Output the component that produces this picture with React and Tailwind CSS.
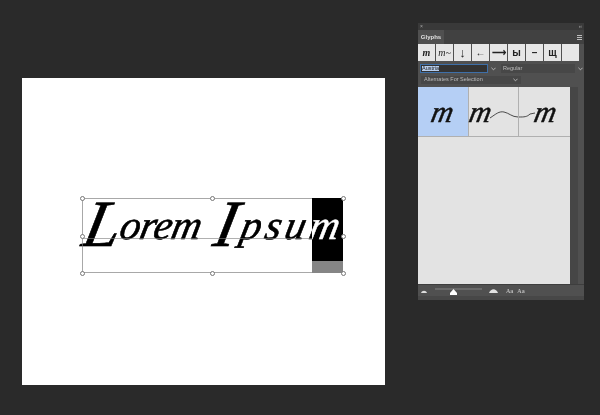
import React from "react";

const script = { fontFamily: '"Liberation Serif", serif' };
const ui = { fontFamily: '"Liberation Sans", Arial, sans-serif' };

function Handle({ cls }) {
  return <span className={`absolute w-[5px] h-[5px] rounded-full bg-white border border-[#777] ${cls}`} />;
}

function Caret() {
  return (
    <svg width="5" height="4" viewBox="0 0 6 4" className="shrink-0">
      <path d="M0.5 0.5 L3 3 L5.5 0.5" fill="none" stroke="#c8c8c8" strokeWidth="1" />
    </svg>
  );
}

function GlyphM({ tail }) {
  const place = tail === "right" ? "justify-start pl-[1px]" : tail === "left" ? "justify-end pr-[13px]" : "justify-center";
  return (
    <span className={`relative flex items-center ${place} w-full h-full`}>
      <span className="inline-block -skew-x-12 text-[30px] italic text-[#111] leading-none [-webkit-text-stroke:0.5px_#111]" style={script}>m</span>
      {tail === "right" && (
        <svg width="28" height="8" viewBox="0 0 28 8" className="absolute right-0 top-[24px]">
          <path d="M0 7 C6 3 9 0 14 1 C19 2 22 6 28 6" fill="none" stroke="#222" strokeWidth="0.8" />
        </svg>
      )}
      {tail === "left" && (
        <svg width="16" height="6" viewBox="0 0 16 6" className="absolute left-0 top-[25px]">
          <path d="M0 5 C5 5 8 5 11 2 L16 1" fill="none" stroke="#222" strokeWidth="0.8" />
        </svg>
      )}
    </span>
  );
}

function TopCell({ children }) {
  return (
    <div className="w-[17px] h-[17px] bg-[#e6e6e6] flex items-center justify-center text-[10px] font-bold text-[#222] leading-none overflow-hidden">
      {children}
    </div>
  );
}

export default function App() {
  return (
    <div className="w-[600px] h-[415px] bg-[#2a2a2a] flex items-start overflow-hidden" style={ui}>
      {/* Document canvas */}
      <div className="relative ml-[22px] mt-[78px] w-[363px] h-[307px] bg-white shrink-0">
        <div className="absolute left-[60px] top-[120px] w-[261px] h-[75px] border border-[#a8a8a8]" />
        <div className="absolute left-[60px] top-[160px] w-[261px] h-px bg-[#b0b0b0]" />
        <div className="absolute left-[290px] top-[120px] w-[31px] h-[63px] bg-black" />
        <div className="absolute left-[290px] top-[183px] w-[31px] h-[12px] bg-[#858585]" />
        <div
          className="absolute left-[62px] top-[106px] w-[290px] h-[80px] text-[41px] leading-[80px] italic text-white mix-blend-difference whitespace-nowrap [-webkit-text-stroke:0.5px_white]"
          style={script}
        >
          <span className="inline-block -skew-x-12 tracking-[-0.5px]">
            <span className="text-[66px]">L</span>
            <span className="align-[7px]">orem</span>
          </span>
          <span className="inline-block -skew-x-12 ml-[14px] tracking-[4px]">
            <span className="text-[66px]">I</span>
            <span className="align-[7px]">psum</span>
          </span>
        </div>
        <Handle cls="left-[58px] top-[118px]" />
        <Handle cls="left-[188px] top-[118px]" />
        <Handle cls="left-[319px] top-[118px]" />
        <Handle cls="left-[58px] top-[156px]" />
        <Handle cls="left-[319px] top-[156px]" />
        <Handle cls="left-[58px] top-[193px]" />
        <Handle cls="left-[188px] top-[193px]" />
        <Handle cls="left-[319px] top-[193px]" />
      </div>

      {/* Glyphs panel */}
      <div className="ml-[33px] mt-[23px] w-[166px] h-[277px] bg-[#505050] flex flex-col shrink-0">
        <div className="h-[7px] bg-[#393939] flex items-center justify-between px-[2px] text-[5px] leading-none text-[#aaa]">
          <span>×</span>
          <span>‹‹</span>
        </div>
        <div className="h-[14px] bg-[#414141] flex items-stretch justify-between">
          <div className="w-[26px] bg-[#505050] flex items-center justify-center text-[6px] font-bold text-[#e0e0e0]">Glyphs</div>
          <div className="flex flex-col justify-center gap-px pr-[2px]">
            <span className="block w-[5px] h-px bg-[#bbb]" />
            <span className="block w-[5px] h-px bg-[#bbb]" />
            <span className="block w-[5px] h-px bg-[#bbb]" />
          </div>
        </div>
        <div className="flex items-start h-[20px] gap-px">
          <TopCell><span className="italic" style={script}>m</span></TopCell>
          <TopCell><span className="italic whitespace-nowrap font-normal" style={script}>m~</span></TopCell>
          <TopCell><span className="text-[13px]">↓</span></TopCell>
          <TopCell><span className="text-[10px]">←</span></TopCell>
          <TopCell><span className="text-[10px]">⟶</span></TopCell>
          <TopCell>ы</TopCell>
          <TopCell>–</TopCell>
          <TopCell>щ</TopCell>
          <TopCell />
        </div>
        <div className="flex items-center h-[9px] pl-[2px] gap-[2px] text-[5.5px] leading-none text-[#bdbdbd]">
          <div className="w-[68px] h-[9px] bg-[#333] border border-[#3e6fa8] flex items-center px-[1px]">
            <span className="bg-[#b9cfee] text-[#222]">Austria</span>
          </div>
          <div className="w-[7px] flex justify-center"><Caret /></div>
          <div className="ml-[2px] w-[74px] h-[9px] bg-[#474747] flex items-center px-[2px]">Regular</div>
          <div className="w-[6px] flex justify-center"><Caret /></div>
        </div>
        <div className="mt-[3px] ml-[3px] w-[100px] h-[8px] bg-[#474747] flex items-center justify-between px-[3px] text-[5.5px] leading-none text-[#bdbdbd]">
          <span>Alternates For Selection</span>
          <Caret />
        </div>
        <div className="mt-[3px] flex h-[197px]">
          <div className="w-[152px] bg-[#e3e3e3] flex flex-col">
            <div className="grid grid-cols-3 h-[50px] border-b border-[#b0b0b0]">
              <div className="bg-[#b5cff5] border-r border-[#b0b0b0]"><GlyphM /></div>
              <div className="border-r border-[#b0b0b0]"><GlyphM tail="right" /></div>
              <div><GlyphM tail="left" /></div>
            </div>
          </div>
          <div className="w-[8px] bg-[#464646]" />
        </div>
        <div className="flex-1 flex flex-col">
          <div className="h-[12px] border-t border-[#3e3e3e] flex items-center pl-[3px]">
            <svg width="6" height="4" viewBox="0 0 6 4"><path d="M0 4 C1 1 5 1 6 4 Z" fill="#ddd" /></svg>
            <div className="relative w-[47px] h-[2px] bg-[#6a6a6a] ml-[8px] -mt-[3px]">
              <svg width="7" height="6" viewBox="0 0 7 6" className="absolute left-[15px] top-[1px]"><path d="M0 6 L0 4 L3.5 0 L7 4 L7 6 Z" fill="#fff" /></svg>
            </div>
            <svg width="9" height="5" viewBox="0 0 9 5" className="ml-[7px]"><path d="M0 5 C2 0 7 0 9 5 Z" fill="#e2e2e2" /></svg>
            <span className="ml-[8px] text-[6px] font-bold leading-none text-[#bbb]" style={script}>Aa</span>
            <span className="ml-[4px] text-[6px] font-bold leading-none text-[#bbb]" style={script}>Aa</span>
          </div>
          <div className="flex-1 bg-[#474747]" />
        </div>
      </div>
    </div>
  );
}
